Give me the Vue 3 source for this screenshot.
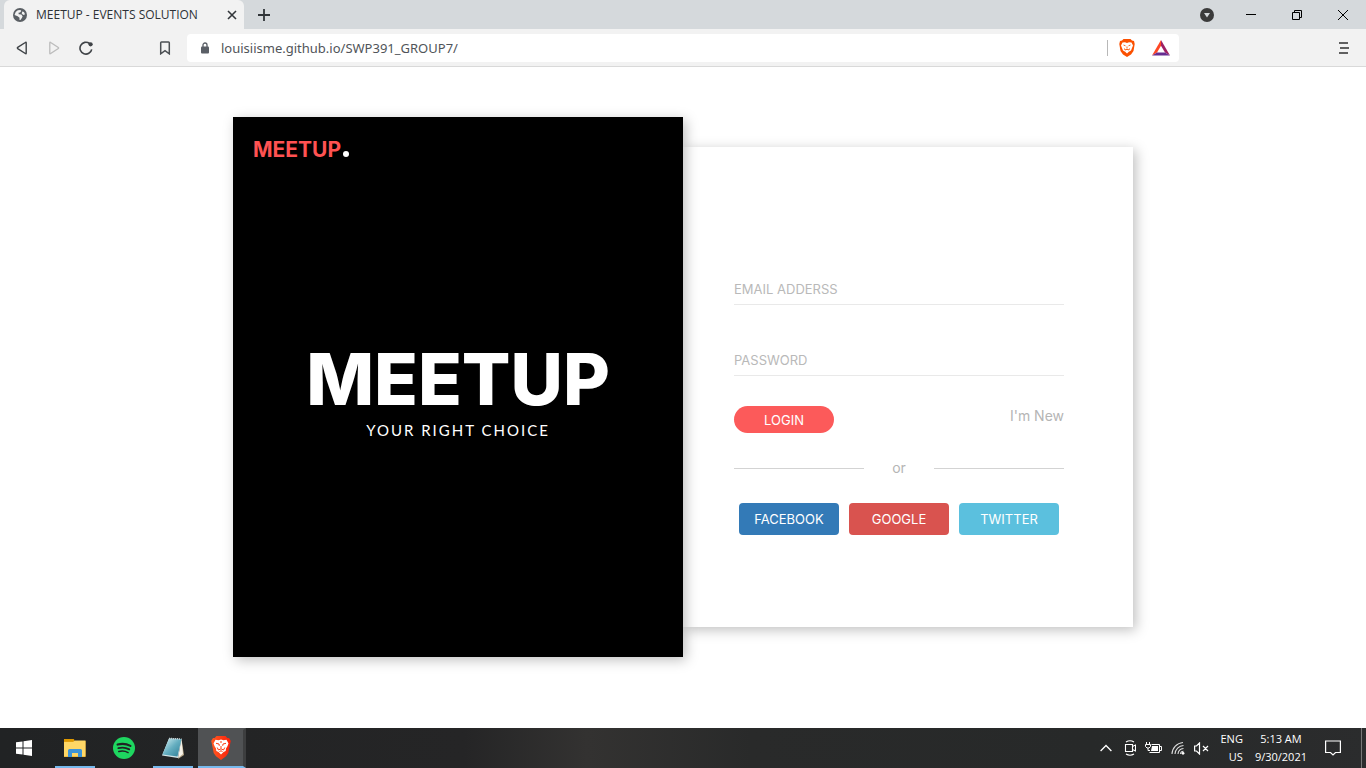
<script setup>
import { ref } from 'vue'

const address = ref('louisiisme.github.io/SWP391_GROUP7/')
const email = ref('')
const password = ref('')
const socials = [
  { name: 'FACEBOOK', tone: 'facebook' },
  { name: 'GOOGLE', tone: 'google' },
  { name: 'TWITTER', tone: 'twitter' },
]
</script>

<template>
  <div class="screen">
    <header class="tabstrip">
      <div class="tab">
        <svg class="favicon" viewBox="0 0 16 16" width="14" height="14" aria-hidden="true">
          <circle cx="8" cy="8" r="8" fill="#5a5f64" />
          <path d="M1.800 8Q2.500 4 5.500 2.500L8.500 2.200 9.500 3.500 8 5 6.300 5.300 6.500 7 9.500 7.500 11 9.300 10.300 11 8.500 13.800 7.300 13.500 7.500 11 5.300 9.500Z" fill="#f2f2f2" />
          <path d="M10.500 4L12.500 4.500 13.800 7 12 8 10 6.500Z" fill="#f2f2f2" />
        </svg>
        <span class="tab-title">MEETUP - EVENTS SOLUTION</span>
        <button class="icon-button" type="button" aria-label="Close tab">
          <svg viewBox="0 0 10 10" width="10" height="10"><path d="M1 1L9 9M9 1L1 9" stroke="#33373b" stroke-width="1.600" /></svg>
        </button>
      </div>
      <button class="icon-button new-tab" type="button" aria-label="New tab">
        <svg viewBox="0 0 12 12" width="12" height="12"><path d="M6 0V12M0 6H12" stroke="#303438" stroke-width="1.800" /></svg>
      </button>
      <div class="window-controls">
        <button class="icon-button tab-search" type="button" aria-label="Search tabs">
          <svg viewBox="0 0 14 14" width="14" height="14"><circle cx="7" cy="7" r="7" fill="#3b3b3b" /><path d="M4 5H10L7 9.500Z" fill="#d5d9dc" /></svg>
        </button>
        <button class="icon-button" type="button" aria-label="Minimize">
          <svg viewBox="0 0 10 10" width="10" height="10"><path d="M0 4.500H10" stroke="#000" /></svg>
        </button>
        <button class="icon-button" type="button" aria-label="Restore">
          <svg viewBox="0 0 10 10" width="10" height="10"><path d="M.5 2.500H7.500V9.500H.5ZM2.500 2.500V.5H9.500V7.500H7.500" fill="none" stroke="#000" /></svg>
        </button>
        <button class="icon-button" type="button" aria-label="Close">
          <svg viewBox="0 0 10 10" width="10" height="10"><path d="M0 0L10 10M10 0L0 10" stroke="#000" /></svg>
        </button>
      </div>
    </header>

    <nav class="toolbar" aria-label="Browser toolbar">
      <button class="icon-button" type="button" aria-label="Back">
        <svg viewBox="0 0 12 14" width="12" height="14"><path d="M10.200 1.800V12.200Q10.200 13.200 9.300 12.500L1.700 7.600Q1 7 1.700 6.400L9.300 1.500Q10.200 .8 10.200 1.800Z" fill="none" stroke="#3f4347" stroke-width="1.400" /></svg>
      </button>
      <button class="icon-button" type="button" aria-label="Forward">
        <svg viewBox="0 0 12 14" width="12" height="14"><path d="M1.800 1.800V12.200Q1.800 13.200 2.700 12.500L10.300 7.600Q11 7 10.300 6.400L2.700 1.500Q1.800 .8 1.800 1.800Z" fill="none" stroke="#bcbcbc" stroke-width="1.300" /></svg>
      </button>
      <button class="icon-button reload" type="button" aria-label="Reload">
        <svg viewBox="0 0 14 14" width="14" height="14"><path d="M12.700 8.300A5.900 5.900 0 1 1 10.500 2.500" fill="none" stroke="#3f4347" stroke-width="1.600" /><circle cx="11.600" cy="3.300" r="2.100" fill="#3f4347" /></svg>
      </button>
      <button class="icon-button bookmark" type="button" aria-label="Bookmark this page">
        <svg viewBox="0 0 12 14" width="12" height="14"><path d="M1.700 12.800V1.800Q1.700 1 2.500 1H9.500Q10.300 1 10.300 1.800V12.800L6 9.700Z" fill="none" stroke="#4b4f53" stroke-width="1.500" /></svg>
      </button>
      <div class="address">
        <svg viewBox="0 0 8 12" width="8" height="12" aria-hidden="true"><path d="M2 5V3A2 2 0 0 1 6 3V5" fill="none" stroke="#5a5f66" stroke-width="1.300" /><rect y="4.500" width="8" height="7" rx="1" fill="#5a5f66" /></svg>
        <input v-model="address" type="text" aria-label="Address" />
        <span class="address-divider"></span>
        <button class="icon-button" type="button" aria-label="Brave Shields">
          <svg viewBox="0 0 16 18" width="16" height="18"><path d="M4.500 0H11.500L13 1.500 15 2 15.700 5 14.500 12 12 15.500 8 18 4 15.500 1.500 12 .3 5 1 2 3 1.500Z" fill="#fb5000" /><path d="M3.500 3.500L6 3.200 8 4 10 3.200 12.500 3.500 14 6.500 12.800 9.500 12 11.500 9.800 12.800 8 14.500 6.200 12.800 4 11.500 3.200 9.500 2 6.500Z" fill="#fff" /><path d="M4.500 6L6.500 6.800M11.500 6L9.500 6.800M8 7.500V9.500M5.500 9.500L6 11 8 10.300 10 11 10.500 9.500" fill="none" stroke="#fb5000" stroke-width=".9" /></svg>
        </button>
        <button class="icon-button" type="button" aria-label="Brave Rewards">
          <svg viewBox="0 0 18 16" width="18" height="16"><path d="M9 0L0 15.500 5 12.500 9 5.800Z" fill="#ff4724" /><path d="M9 0L18 15.500 13 12.500 9 5.800Z" fill="#9e1f63" /><path d="M0 15.500L5 12.500H13L18 15.500Z" fill="#662d91" /></svg>
        </button>
      </div>
      <button class="icon-button menu" type="button" aria-label="Menu">
        <svg viewBox="0 0 10 12" width="10" height="12"><path d="M0 1H9M1 6H10M0 11H9" stroke="#606060" stroke-width="2" /></svg>
      </button>
    </nav>

    <main class="page">
      <section class="hero">
        <p class="brand">MEETUP<span class="dot"></span></p>
        <div class="headline">
          <h1>MEETUP</h1>
          <p>YOUR RIGHT CHOICE</p>
        </div>
      </section>
      <form class="login" @submit.prevent>
        <input v-model="email" class="field" type="email" placeholder="EMAIL ADDERSS" aria-label="Email address" />
        <input v-model="password" class="field" type="password" placeholder="PASSWORD" aria-label="Password" />
        <div class="actions">
          <button class="submit" type="submit">LOGIN</button>
          <a href="#">I'm New</a>
        </div>
        <div class="separator"><span>or</span></div>
        <div class="socials">
          <button v-for="item in socials" :key="item.name" type="button" :class="item.tone">{{ item.name }}</button>
        </div>
      </form>
    </main>

    <footer class="taskbar">
      <button class="task" type="button" aria-label="Start">
        <svg viewBox="0 0 16 16" width="16" height="16"><path d="M0 2.300L6.500 1.400V7.500H0ZM7.500 1.200L16 0V7.500H7.500ZM0 8.500H6.500V14.600L0 13.700ZM7.500 8.500H16V16L7.500 14.800Z" fill="#fff" /></svg>
      </button>
      <button class="task running grouped" type="button" aria-label="File Explorer">
        <svg viewBox="0 0 22 18" width="22" height="18"><path d="M0 0H9L11 2H21.500V18H0Z" fill="#e5a21b" /><path d="M0 3H9L11 1.500H21.500V17.500H0Z" fill="#ffd766" /><path d="M0 2.500H9L10.500 1 9.500 0H0Z" fill="#df9900" /><path d="M4 18V11.500Q4 10 5.500 10H16.500Q18 10 18 11.500V18H14V14H8V18Z" fill="#3e94d8" /></svg>
      </button>
      <button class="task" type="button" aria-label="Spotify">
        <svg viewBox="0 0 24 24" width="22" height="22"><circle cx="12" cy="12" r="12" fill="#1ed760" /><g fill="none" stroke="#212324" stroke-linecap="round"><path d="M5 8.300Q12.500 6.200 19 9.700" stroke-width="2.300" /><path d="M5.800 12.200Q12 10.400 17.800 13.500" stroke-width="1.900" /><path d="M6.300 15.800Q12 14.400 16.500 17" stroke-width="1.600" /></g></svg>
      </button>
      <button class="task running" type="button" aria-label="Notepad">
        <svg viewBox="0 0 24 24" width="24" height="24">
          <defs><linearGradient id="pad" x1="0" y1="0" x2="1" y2="1"><stop stop-color="#d8f2f5" /><stop offset=".5" stop-color="#65aec0" /><stop offset="1" stop-color="#2b7d96" /></linearGradient></defs>
          <path d="M20.500 3L23 19 17 23 18 20Z" fill="#b8a88a" /><path d="M20.500 3L22 18 17 22Z" fill="#f5f2e8" /><path d="M8 2.500L20.500 3 17 22 1 19.500Z" fill="#d5e5e8" /><path d="M8 2.500L20.500 3 16.500 20.500 1.500 18.500Z" fill="url(#pad)" /><path d="M8 2.500L20.500 3" stroke="#c7d0d3" stroke-width="1.500" stroke-dasharray="1 1" />
        </svg>
      </button>
      <button class="task running active" type="button" aria-label="Brave">
        <svg viewBox="0 0 20 24" width="20" height="24">
          <defs><linearGradient id="lion"><stop stop-color="#ff5a22" /><stop offset="1" stop-color="#fb1f0a" /></linearGradient></defs>
          <path d="M5.500 0H14.500L16.300 2 18 1.900 19.800 5 19.300 7 17.300 17 15 20.300 10 24 5 20.300 2.700 17 .7 7 .2 5 2 1.900 3.700 2Z" fill="url(#lion)" />
          <path d="M4.500 3.800L7.500 4.300 10 3.600 12.500 4.300 15.500 3.800 17.500 7.500 16.300 10.500 15 12.500 14.700 15 12.500 16 10 18.500 7.500 16 5.300 15 5 12.500 3.700 10.500 2.500 7.500Z" fill="#fff" />
          <path d="M5 7.300L8 8 8.300 9.800M15 7.300L12 8 11.700 9.800M10 5V7M10 10V12.500M6.200 11.500L7.500 14 10 12.800 12.500 14 13.800 11.500M8.500 15.500L10 14.800 11.500 15.500" fill="none" stroke="#fb3c12" stroke-width="1" />
        </svg>
      </button>
      <div class="tray">
        <button class="icon-button" type="button" aria-label="Show hidden icons">
          <svg viewBox="0 0 12 8" width="12" height="8"><path d="M.6 7L6 1.500 11.400 7" fill="none" stroke="#fff" stroke-width="1.300" /></svg>
        </button>
        <svg class="meet" viewBox="0 0 12 16" width="12" height="16" role="img" aria-label="Meet now"><path d="M2 2Q6-.5 10 2M2 14Q6 16.500 10 14M1.500 4.500H8.500V11.500H1.500ZM8.500 6.500L11.500 5V11L8.500 9.500" fill="none" stroke="#fff" stroke-width="1.100" /></svg>
        <svg viewBox="0 0 17 12" width="17" height="12" role="img" aria-label="Battery charging"><path d="M6.500 2.500H14.500V10.500H4.500M15 4.500H16.500V8.500H15M1.500 0V2M4.500 0V2M3 6V8.500H5" fill="none" stroke="#fff" /><path d="M.5 2.500H5.500V4.500L4 6H2L.5 4.500Z" fill="none" stroke="#fff" /><path d="M7 4H13V9H6Z" fill="#fff" /></svg>
        <svg viewBox="0 0 14 14" width="14" height="14" role="img" aria-label="Wireless network"><g fill="none" stroke="#ddd" stroke-width="1.100"><path d="M1 13A12 12 0 0 1 12 1.500M4 13A9 9 0 0 1 12.500 4.500M7 13A6 6 0 0 1 12.500 7.500M9.500 13A3 3 0 0 1 12.500 10.300" /></g><circle cx="12" cy="12.300" r="1.400" fill="#fff" /></svg>
        <svg viewBox="0 0 16 13" width="16" height="13" role="img" aria-label="Muted"><path d="M.6 4H2.500L5.500 1V12L2.500 9H.6ZM9 4L14 9M14 4L9 9" fill="none" stroke="#fff" stroke-width="1.200" /></svg>
        <p class="language">ENG<br />US</p>
        <p class="clock">5:13 AM<br />9/30/2021</p>
        <button class="icon-button notices" type="button" aria-label="Notifications">
          <svg viewBox="0 0 16 16" width="16" height="16"><path d="M.6 1H15.400V12.500H10.500L8 15 5.500 12.500H.6Z" fill="none" stroke="#fff" stroke-width="1.200" /></svg>
        </button>
      </div>
    </footer>
  </div>
</template>

<style>
body {
  margin: 0;
}
</style>

<style scoped>
.screen {
  display: flex;
  flex-direction: column;
  min-height: 100vh;
  background: #fff;
  font-family: "Open Sans", "Noto Sans", sans-serif;
}

.screen * {
  box-sizing: border-box;
}

p,
h1 {
  margin: 0;
}

svg {
  display: block;
  flex: none;
}

button {
  border: 0;
  padding: 0;
  font-family: inherit;
  cursor: pointer;
}

.icon-button {
  display: flex;
  align-items: center;
  justify-content: center;
  flex: none;
  background: none;
}

.tabstrip {
  display: flex;
  height: 29px;
  padding-left: 4px;
  background: #d5d9dc;
}

.tab {
  display: flex;
  align-items: center;
  width: 240px;
  padding: 0 7px 0 9px;
  border-radius: 6px 6px 0 0;
  background: #f2f2f2;
}

.tab-title {
  flex: 1;
  margin-left: 9px;
  color: #2d3136;
  font-size: 12px;
  line-height: 16px;
  white-space: nowrap;
}

.new-tab {
  margin-left: 14px;
}

.window-controls {
  display: flex;
  align-items: center;
  margin-left: auto;
}

.window-controls button {
  width: 46px;
  height: 28px;
}

.window-controls .tab-search {
  width: 42px;
}

.toolbar {
  display: flex;
  align-items: center;
  height: 38px;
  padding: 0 17px 0 16px;
  border-bottom: 1px solid #d9d9d9;
  background: #f2f2f2;
}

.toolbar > .icon-button {
  margin-right: 20px;
}

.toolbar > .reload {
  margin-left: -1px;
}

.toolbar > .bookmark {
  margin-left: 46px;
  margin-right: 16px;
}

.toolbar > .menu {
  margin: 0 0 0 auto;
}

.address {
  display: flex;
  align-items: center;
  flex: 1;
  max-width: 992px;
  height: 28px;
  padding: 0 9px 0 14px;
  border-radius: 4px;
  background: #fff;
}

.address input {
  flex: 1;
  min-width: 0;
  margin-left: 12px;
  padding: 0;
  border: 0;
  outline: 0;
  color: #505459;
  font-family: "Noto Sans", sans-serif;
  font-size: 13px;
  line-height: 20px;
}

.address-divider {
  width: 1px;
  height: 16px;
  background: #b8b8b8;
}

.address .icon-button {
  width: 18px;
  margin-left: 10px;
}

.address .icon-button + .icon-button {
  margin-left: 16px;
}

.page {
  display: flex;
  flex: 1;
  align-items: center;
  justify-content: center;
  padding: 50px 20px 71px;
  font-family: Inter, "Open Sans", sans-serif;
}

.hero,
.login {
  flex: 0 1 450px;
  box-shadow: 3px 3px 12px rgba(0, 0, 0, 0.25);
}

.hero {
  display: flex;
  flex-direction: column;
  z-index: 1;
  min-height: 540px;
  padding: 20px;
  background: #000;
  color: #fff;
}

.brand {
  display: flex;
  align-items: baseline;
  color: #ff5252;
  font-size: 21px;
  font-weight: 700;
  line-height: 26px;
}

.dot {
  width: 6px;
  height: 6px;
  margin-left: 2px;
  border-radius: 50%;
  background: #fff;
}

.headline {
  display: flex;
  flex: 1;
  flex-direction: column;
  justify-content: center;
  padding-bottom: 24px;
  text-align: center;
}

.headline h1 {
  font-size: 72px;
  font-weight: 800;
  line-height: 84px;
}

.headline p {
  font-family: Lato, sans-serif;
  font-size: 15px;
  letter-spacing: 2px;
  line-height: 18px;
}

.login {
  display: flex;
  flex-direction: column;
  min-height: 480px;
  padding: 127px 69px 92px 51px;
  background: #fff;
}

.field {
  width: 100%;
  height: 31px;
  padding: 0;
  border: 0;
  border-bottom: 1px solid #e9e9e9;
  outline: 0;
  background: none;
  color: #555;
  font-family: inherit;
  font-size: 13px;
}

.field + .field {
  margin-top: 40px;
}

.field::placeholder {
  color: #b9b9b9;
  opacity: 1;
}

.actions {
  display: flex;
  align-items: flex-start;
  justify-content: space-between;
  margin-top: 30px;
}

.submit {
  width: 100px;
  height: 27px;
  border-radius: 14px;
  background: #fc5a5a;
  color: #fff;
  font-size: 13px;
}

.actions a {
  color: #b5b5b5;
  font-size: 14px;
  line-height: 20px;
  text-decoration: none;
}

.separator {
  display: flex;
  align-items: center;
  margin-top: 25px;
  color: #b5b5b5;
  font-size: 14px;
  line-height: 20px;
}

.separator::before,
.separator::after {
  flex: 1;
  height: 1px;
  background: #d3d3d3;
  content: "";
}

.separator span {
  width: 70px;
  text-align: center;
}

.socials {
  display: flex;
  gap: 10px;
  margin-top: 25px;
  padding: 0 5px;
}

.socials button {
  flex: 1;
  height: 32px;
  border-radius: 4px;
  color: #fff;
  font-size: 13px;
}

.facebook {
  background: #337ab7;
}

.google {
  background: #d9534f;
}

.twitter {
  background: #5bc0de;
}

.taskbar {
  display: flex;
  height: 40px;
  background: linear-gradient(90deg, #212324 0%, #252526 34%, #333231 43%, #292a2a 55%, #272929 80%, #2b2c2d 100%);
  color: #fff;
}

.task {
  display: flex;
  align-items: center;
  justify-content: center;
  width: 48px;
  margin-right: 1px;
  border-top: 2px solid transparent;
  border-bottom: 2px solid transparent;
  background: none;
}

.running {
  width: 40px;
  margin: 0 5px 0 4px;
  border-bottom-color: #76b9ed;
}

.grouped {
  margin-left: 6px;
  margin-right: 5px;
}

.running.active {
  width: 48px;
  margin-left: 0;
  border-top-color: #505254;
  border-right: 3px solid #3d3e3f;
  background: #505254;
}

.tray {
  display: flex;
  align-items: center;
  margin-left: auto;
  padding-right: 4px;
  border-right: 1px solid #777;
  margin-right: 4px;
}

.tray > svg {
  margin-left: 9px;
}

.tray > .meet {
  margin-left: 12px;
}

.language,
.clock {
  font-size: 11px;
  line-height: 18px;
}

.language {
  margin-left: 10px;
  text-align: right;
}

.clock {
  margin-left: 12px;
  text-align: center;
}

.notices {
  margin: 0 16px 0 18px;
}
</style>
